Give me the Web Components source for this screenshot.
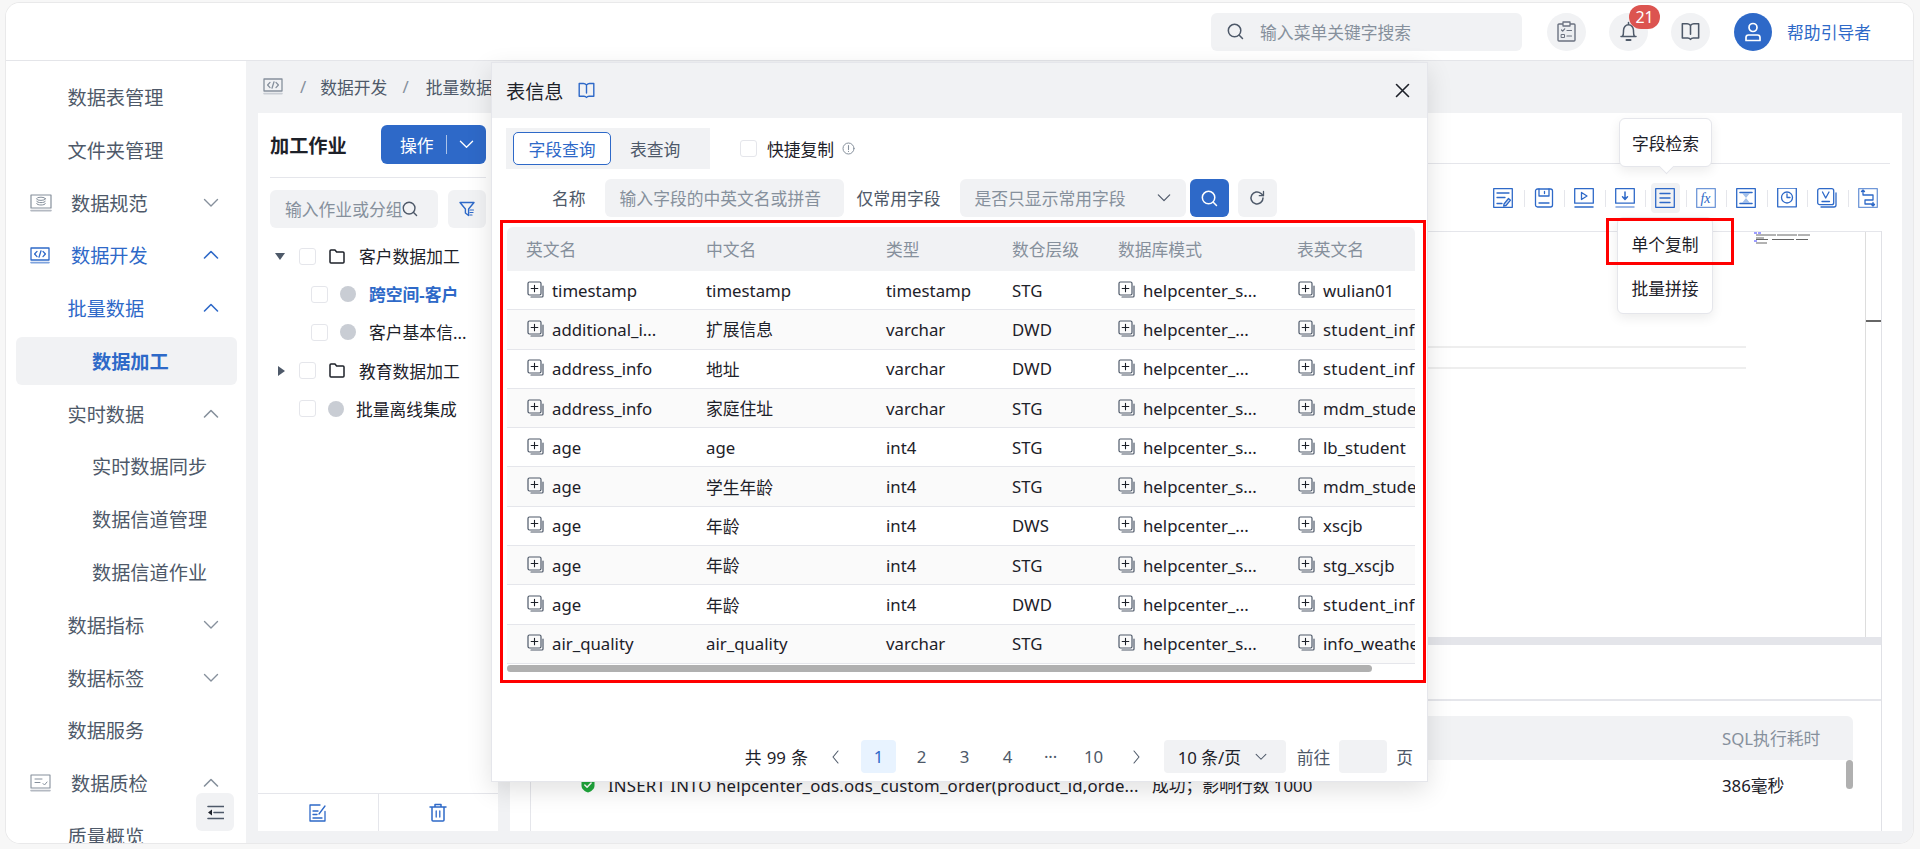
<!DOCTYPE html>
<html lang="zh">
<head>
<meta charset="utf-8">
<title>表信息</title>
<style>
html,body{margin:0;padding:0;height:849px;overflow:hidden;background:#f7f7f7;}
body{font-family:"Noto Sans","Noto Sans CJK SC",sans-serif;font-size:16.8px;color:#1d2129;}
</style>
</head>
<body>
<app-root></app-root>
<script>
const BLUE='#2e69c8';
const svg=(w,h,vb,body,extra='')=>`<svg width="${w}" height="${h}" viewBox="${vb}" fill="none" stroke-linecap="round" stroke-linejoin="round" style="display:block;flex:none;${extra}">${body}</svg>`;
const ICON={
 chevD:(c='#86909c',s=16)=>svg(s,s,'0 0 16 16',`<path d="M1.5 4.5 8 11l6.5-6.5" stroke="${c}" stroke-width="1.4"/>`),
 chevU:(c='#86909c',s=16)=>svg(s,s,'0 0 16 16',`<path d="M1.5 11 8 4.5l6.5 6.5" stroke="${c}" stroke-width="1.6"/>`),
 search:(c='#4e5969',s=18)=>svg(s,s,'0 0 18 18',`<circle cx="8" cy="8" r="6.6" stroke="${c}" stroke-width="1.6"/><path d="m13 13 3.4 3.4" stroke="${c}" stroke-width="1.6"/>`),
 dbScreen:svg(22,18,'0 0 22 18',`<rect x="1" y="1" width="20" height="13" stroke="#86909c" stroke-width="1.2"/><path d="M1 16.6h20" stroke="#b4b9c2" stroke-width="1.6"/><ellipse cx="11" cy="4.8" rx="4.4" ry="1.6" stroke="#86909c"/><path d="M6.6 7.2c0 2 8.8 2 8.8 0M6.6 9.6c0 2 8.8 2 8.8 0" stroke="#86909c"/>`),
 code:(c,c2)=>svg(20,17,'0 0 20 17',`<rect x="1" y="1" width="18" height="12" stroke="${c}" stroke-width="1.3"/><path d="M1 15.6h18" stroke="${c2}" stroke-width="1.6"/><path d="M7 4.4 4.6 7 7 9.6M13 4.4 15.4 7 13 9.6M11 3.8 9 10.2" stroke="${c}" stroke-width="1.3"/>`),
 qc:svg(21,18,'0 0 21 18',`<rect x="1" y="1" width="19" height="13" stroke="#86909c" stroke-width="1.1"/><path d="M1 16.6h19" stroke="#b4b9c2" stroke-width="1.6"/><path d="M5 5h7M5 8.5h5M13 9.5l1.5 1.5 2.5-3" stroke="#86909c"/>`),
 folder:svg(16,15,'0 0 16 15',`<path d="M1 3V2a1 1 0 0 1 1-1h4l1.6 2H14a1 1 0 0 1 1 1v9a1 1 0 0 1-1 1H2a1 1 0 0 1-1-1z" stroke="#1d2129" stroke-width="1.5"/>`),
 filter:svg(16,16,'0 0 16 16',`<path d="M1 1.5h14L9.6 8v6.5L6.4 12V8z" stroke="${BLUE}" stroke-width="1.4"/><path d="M11 9h3.5M11 11.5h3M11 14h2" stroke="${BLUE}" stroke-width="1.2"/>`),
 edit:svg(18,18,'0 0 18 18',`<path d="M16 7.5V17H1V1h10" stroke="${BLUE}" stroke-width="1.3"/><path d="M4 7h5M4 10.5h4M4 14h9M10 10l6-8" stroke="${BLUE}" stroke-width="1.3"/>`),
 trash:svg(18,19,'0 0 18 19',`<path d="M1 4h16M6 4V1.5h6V4M3 4v13a1 1 0 0 0 1 1h10a1 1 0 0 0 1-1V4" stroke="${BLUE}" stroke-width="1.5"/><path d="M7.2 8v6M10.8 8v6" stroke="${BLUE}" stroke-width="1.3"/>`),
 book:(c,w=17)=>svg(w,w,'0 0 17 17',`<path d="M8.5 3c-1-1-2-1.5-3-1.5H1.2v12.8H6c1 0 2 .4 2.5 1.2.5-.8 1.5-1.2 2.5-1.2h4.8V1.5h-4.3c-1 0-2 .5-3 1.5zM8.5 3v8" stroke="${c}" stroke-width="1.4"/>`),
 clip:svg(19,21,'0 0 19 21',`<rect x="1" y="3" width="17" height="17" rx="1" stroke="#6b7280" stroke-width="1.4" fill="#eceef1"/><rect x="6" y="1" width="7" height="4" stroke="#6b7280" stroke-width="1.3" fill="#f1f2f4"/><path d="m4.5 9 1.2 1.2 2-2.4M10 9.5h4.5M10 15h4.5" stroke="#6b7280" stroke-width="1.2"/><rect x="4.5" y="13.5" width="3" height="3" stroke="#6b7280"/>`),
 bell:svg(19,21,'0 0 19 21',`<path d="M2 15.5h15M3.5 15.5c1.2-1.5 1-4 1-6 0-3 2-5.8 5-5.8s5 2.800 5 5.800c0 2 -.2 4.500 1 6M9.500 1.500v2" stroke="#4e5969" stroke-width="1.5"/><path d="M7.500 19h4" stroke="#4e5969" stroke-width="2"/>`),
 user:svg(20,20,'0 0 20 20',`<circle cx="10" cy="5.500" r="4" stroke="#fff" stroke-width="1.7"/><path d="M3 18.500v-3a2.500 2.500 0 0 1 2.500-2.500h9a2.500 2.500 0 0 1 2.500 2.500v3z" stroke="#fff" stroke-width="1.7"/>`),
 copyPlus:svg(17,17,'0 0 17 17',`<rect x="1" y="1" width="13" height="13" rx="1.400" stroke="#4e5969" stroke-width="1.200"/><path d="M7.500 4.200v6.600M4.200 7.500h6.600" stroke="#1d2129" stroke-width="1.100"/><path d="M16 5v10a1 1 0 0 1-1 1H4" stroke="#4e5969" stroke-width="1.200"/>`),
 info:svg(13,13,'0 0 13 13',`<circle cx="6.500" cy="6.500" r="5.500" stroke="#86909c"/><path d="M6.500 3.500v4M6.500 9.300v.2" stroke="#86909c" stroke-width="1.100"/>`),
 close:svg(15,15,'0 0 15 15',`<path d="m1.500 1.500 12 12M13.500 1.500l-12 12" stroke="#1d2129" stroke-width="1.600"/>`),
 refresh:svg(16,16,'0 0 16 16',`<path d="M14 8a6 6 0 1 1-2-4.500L14.200 5.500" stroke="#4e5969" stroke-width="1.500"/><path d="M14.500 1.500v4.200h-4.200" stroke="#4e5969" stroke-width="1.300"/>`),
 check:svg(16,16,'0 0 16 16',`<path d="M8 .8 14.500 3v5.500c0 3.500-3 5.800-6.500 7-3.500-1.200-6.500-3.500-6.500-7V3z" fill="#1fa83c"/><path d="m4.800 8 2.300 2.300 4-4.300" stroke="#fff" stroke-width="1.500"/>`),
};
const T=(b)=>svg(20,20,'0 0 20 20',b);
const s=`stroke="${BLUE}" stroke-width="1.300"`;
const TOOLS=[
 T(`<rect x=".7" y=".7" width="18.600" height="18.600" ${s}/><path d="M4 5h12M4 9.500h8M4 15.500h5" ${s}/><path d="m11 16 4.500-5.500 2 1.700-4.500 5.300-2.300.5z" ${s} fill="#cfdcf3"/>`),
 T(`<rect x="1.500" y="1" width="17" height="18" rx="2" ${s}/><path d="M5 1v7h10V1M10.500 3.500v2M5 15h10" ${s}/>`),
 T(`<rect x=".7" y=".7" width="18.600" height="14.500" ${s}/><path d="m7.500 4.500 5.500 3.500-5.500 3.500z" ${s}/><path d="M1 19h18" stroke="${BLUE}" stroke-width="1.500"/>`),
 T(`<rect x=".7" y=".7" width="18.600" height="14.500" ${s}/><path d="M10 4v7M7.500 8.800 10 11.500l2.500-2.700" stroke="${BLUE}" stroke-width="1.500"/><path d="M1 19h18" stroke="#7fa3de" stroke-width="1.500"/>`),
 T(`<rect x=".7" y=".7" width="18.600" height="18.600" ${s}/><path d="M5 5.500h10M5 10h10M5 14.500h10" stroke="${BLUE}" stroke-width="1.400"/>`),
 T(`<rect x=".7" y=".7" width="18.600" height="18.600" stroke="#6f97d8" stroke-width="1.300"/><text x="9.500" y="15" text-anchor="middle" font-family="Liberation Serif" font-style="italic" font-size="14" fill="${BLUE}" stroke="none">fx</text>`),
 T(`<rect x=".7" y=".7" width="18.600" height="18.600" ${s}/><path d="M4 4.500h12M4 15.500h12" stroke="${BLUE}" stroke-width="1.600"/><path d="M6 5h8l-4 5zM6 15l4-5 4 5z" fill="#a3bfe9"/>`),
 T(`<rect x=".7" y=".2" width="18.600" height="18.600" ${s}/><circle cx="10" cy="9.500" r="5.500" ${s}/><path d="M10 6v3.500h3" ${s}/>`),
 T(`<rect x=".7" y=".7" width="16" height="16" rx="2" ${s}/><path d="M19 5v12a2 2 0 0 1-2 2H4" ${s}/><path d="m5.500 4 3.200 6L12 4M5 13.500h7.500" ${s}/>`),
 T(`<rect x=".7" y=".7" width="18.600" height="18.600" stroke="#6f97d8" stroke-width="1.300"/><path d="M5 2v5M3.500 3.500 5 2l1.500 1.500M5 7h10v5H7v4h9M15 14.500v3.500M13.500 16.500 15 18l1.500-1.500" ${s}/>`),
];
const define=(name,css,render)=>customElements.define(name,class extends HTMLElement{
  connectedCallback(){ if(this.shadowRoot) return; const r=this.attachShadow({mode:'open'}); r.innerHTML=`<style>${css}</style>${render(this)}`; }
});

define('nav-item',`
 :host{display:flex;align-items:center;flex:none;height:48px;margin:2.400px 9px 2.400px 10px;border-radius:6px;font-size:19.200px;color:#4e5969;white-space:nowrap;}
 :host([tone=blue]){color:${BLUE};}
 :host([active]){background:#f1f2f4;color:${BLUE};font-weight:700;}
 .ic{width:21px;margin-left:14px;margin-right:20px;display:flex;flex:none;}
 .lab{flex:1;}
 .ch{margin-right:18px;}
`,h=>{
 const lv=h.getAttribute('level')||'1', ic=h.getAttribute('icon'), ch=h.getAttribute('chev'), blue=h.getAttribute('tone')==='blue';
 const icon={db:ICON.dbScreen,code:ICON.code(BLUE,'#7fa3de'),qc:ICON.qc}[ic];
 const pad= icon?'':`<span style="width:${lv==='2'?76:51.500}px;flex:none"></span>`;
 const col=blue?BLUE:'#86909c';
 const chev= ch?`<span class="ch">${(ch==='up'?ICON.chevU:ICON.chevD)(col)}</span>`:'';
 return `${pad}${icon?`<span class="ic">${icon}</span>`:''}<span class="lab"><slot></slot></span>${chev}`;
});

define('side-nav',`
 :host{display:flex;flex-direction:column;width:240px;flex:none;background:#fff;padding-top:9.600px;box-sizing:border-box;overflow:hidden;position:relative;}
 .collapse{position:absolute;left:190px;top:732px;width:38px;height:38px;border-radius:6px;background:#f1f2f4;display:flex;align-items:center;justify-content:center;}
`,()=>`<slot></slot><div class="collapse">${svg(17,15,'0 0 17 15',`<path d="M1 1.500h16M7 7.500h10M1 13.500h16" stroke="#4e5969" stroke-width="1.600"/><path d="M5 4.500v6L1 7.500z" fill="#1d2129"/>`)}</div>`);

define('app-header',`
 :host{display:flex;align-items:center;justify-content:flex-end;height:58px;flex:none;box-sizing:border-box;border-bottom:1px solid #e4e5e9;background:#fff;padding-right:42px;}
 .search{width:311px;height:38px;background:#f1f2f4;border-radius:6px;display:flex;align-items:center;padding-left:16px;box-sizing:border-box;color:#86909c;gap:16px;margin-right:25px;}
 .round{width:39px;height:38px;border-radius:50%;background:#f1f2f4;display:flex;align-items:center;justify-content:center;position:relative;margin-right:23px;}
 .badge{position:absolute;left:20px;top:-8px;width:31px;height:24px;border-radius:12px;background:#dc5450;color:#fff;font-size:16px;line-height:24px;text-align:center;}
 .avatar{width:38px;height:38px;border-radius:50%;background:${BLUE};display:flex;align-items:center;justify-content:center;margin:0 15px 0 1px;}
 .name{color:${BLUE};white-space:nowrap;}
`,()=>`<div class="search">${ICON.search('#4e5969',17)}<span>输入菜单关键字搜索</span></div>
 <div class="round">${ICON.clip}</div>
 <div class="round">${ICON.bell}<span class="badge">21</span></div>
 <div class="round">${ICON.book('#4e5969',19)}</div>
 <div class="avatar">${ICON.user}</div><span class="name">帮助引导者</span>`);

define('bread-crumb',`
 :host{display:flex;align-items:center;height:52px;flex:none;padding:0 0 1px 17px;box-sizing:border-box;color:#4e5969;white-space:nowrap;}
 .sep{color:#86909c;margin:0 14px 0 17px;}
 .sep.b{margin:0 17px 0 15px;}
`,()=>`${ICON.code('#86909c','#c9cdd4')}<span class="sep">/</span><span>数据开发</span><span class="sep b">/</span><span>批量数据</span>`);

define('tree-row',`
 :host{display:flex;align-items:center;height:38.200px;white-space:nowrap;color:#1d2129;}
 :host([state=active]){color:${BLUE};font-weight:700;}
 .box{width:17px;height:17px;box-sizing:border-box;border:1.500px solid #e5e6eb;border-radius:3px;background:#fff;flex:none;}
 .dot{width:16px;height:16px;border-radius:50%;background:#c9cdd4;flex:none;margin:0 13px 0 12px;}
 .dot.l{margin-right:12px;}
 .arrow{width:29px;flex:none;display:flex;padding-left:5px;box-sizing:border-box;}
 .folder{margin:0 14px 0 13px;flex:none;display:flex;}
`,h=>{
 const t=h.getAttribute('type');
 if(t==='open'||t==='closed'){
   const a=t==='open'?`<path d="M0 2h10L5 9z" fill="#4e5969"/>`:`<path d="M3 0v10l7-5z" fill="#4e5969"/>`;
   return `<span class="arrow">${svg(10,10,'0 0 10 10',a)}</span><span class="box"></span><span class="folder">${ICON.folder}</span><slot></slot>`;
 }
 return `<span style="width:${t==='child'?41:29}px;flex:none"></span><span class="box"></span><span class="dot${t==='leaf'?' l':''}"></span><slot></slot>`;
});

define('job-panel',`
 :host{display:flex;flex-direction:column;width:240px;flex:none;background:#fff;}
 .head{height:63px;margin:0 12px;border-bottom:1px solid #e5e6eb;display:flex;align-items:center;justify-content:space-between;flex:none;padding-bottom:1px;box-sizing:content-box;}
 .title{font-size:19.200px;font-weight:700;white-space:nowrap;}
 .btn{width:105px;height:39px;background:${BLUE};border-radius:6px;color:#fff;display:flex;align-items:center;box-sizing:border-box;}
 .btn b{font-weight:400;width:65px;padding-left:19px;box-sizing:border-box;white-space:nowrap;}
 .btn i{width:1px;height:19px;background:rgba(255,255,255,.6);margin-right:12px;}
 .tools{display:flex;justify-content:space-between;margin:12px 12px 9px;flex:none;}
 .input{width:168px;height:38px;background:#f1f2f4;border-radius:6px;display:flex;align-items:center;padding-left:15px;box-sizing:border-box;color:#86909c;white-space:nowrap;overflow:hidden;}
 .fbtn{width:38px;height:38px;background:#f1f2f4;border-radius:6px;display:flex;align-items:center;justify-content:center;}
 .tree{flex:1;padding-left:12px;}
 .foot{height:37px;border-top:1px solid #e5e6eb;display:flex;flex:none;}
 .foot span{flex:1;display:flex;align-items:center;justify-content:center;}
 .foot span+span{border-left:1px solid #e5e6eb;}
`,()=>`<div class="head"><span class="title">加工作业</span><div class="btn"><b>操作</b><i></i>${ICON.chevD('#fff',15)}</div></div>
 <div class="tools"><div class="input"><span>输入作业或分组</span>${ICON.search('#4e5969',16)}</div><div class="fbtn">${ICON.filter}</div></div>
 <div class="tree"><slot></slot></div>
 <div class="foot"><span>${ICON.edit}</span><span>${ICON.trash}</span></div>`);

define('work-panel',`
 :host{display:flex;flex-direction:column;flex:1;background:#fff;min-width:0;}
 .tabs{height:50px;flex:none;margin-right:12px;border-bottom:1px solid #e5e6eb;box-sizing:content-box;}
 .toolbar{height:67px;flex:none;display:flex;justify-content:flex-end;align-items:center;padding-right:14px;border-bottom:0;}
 .tool{width:40.500px;height:20px;display:flex;justify-content:center;position:relative;}
 .tool+.tool::before{content:"";position:absolute;left:0;top:2px;height:17px;width:1px;background:#e5e6eb;}
 .tool.on::after{content:"";position:absolute;left:6px;right:5.500px;top:-5px;bottom:-5px;background:#f1f2f4;border-radius:4px;z-index:0;}
 .tool svg{position:relative;z-index:1;}
 .inner{flex:1;display:flex;flex-direction:column;margin:0 20px;border-right:1px solid #e0e1e6;border-left:1px solid #e5e6eb;min-height:0;}
 .editor{height:406px;flex:none;border-top:1.500px solid #e5e6eb;box-sizing:border-box;position:relative;}
 .mini{position:absolute;right:0;top:0;bottom:0;width:15px;border-left:1.500px solid #ddd;background:#fff;}
 .mini::after{content:"";position:absolute;left:0;right:0;top:88px;height:2px;background:#666;}
 .map{position:absolute;left:1223px;top:0;}
 .rule{position:absolute;left:0;width:1215px;height:2px;background:#eee;}
 .bar{height:8px;background:#e4e5ea;flex:none;}
 .sub{height:56px;flex:none;border-bottom:2px solid #e5e6eb;box-sizing:border-box;}
 .res{padding:15px 28px 0 15px;}
 .rh{height:44px;background:#f1f2f4;border-radius:6px 6px 0 0;display:flex;align-items:center;color:#86909c;white-space:nowrap;}
 .rr{height:50px;display:flex;align-items:center;white-space:nowrap;position:relative;margin-top:0;}
 .c1{display:flex;gap:12px;align-items:center;box-sizing:border-box;flex:none;}
 .rh span:first-child{margin-left:1176px;}
 .thumb{position:absolute;right:0;top:0;width:7px;height:29px;border-radius:4px;background:#b0b0b0;}
`,()=>`<div class="tabs"></div>
 <div class="toolbar">${TOOLS.map((t,i)=>`<span class="tool${i===4?' on':''}">${t}</span>`).join('')}</div>
 <div class="inner">
  <div class="editor">
   <div class="rule" style="top:114px"></div><div class="rule" style="top:135px"></div>
   <svg class="map" width="56" height="12" viewBox="0 0 56 12"><path d="M0 1h3M4 1h3" stroke="#3c3cff"/><path d="M2 3h20M23 3h20M44 3h12" stroke="#666" stroke-width="1"/><path d="M2 6h8" stroke="#666" stroke-width="1"/><path d="M2 7.500h12M18 7.500h22M42 7.500h12" stroke="#666" stroke-width="1"/><path d="M0 9h3" stroke="#3c3cff"/><path d="M2 11h11" stroke="#666" stroke-width="1"/></svg>
   <div class="mini"></div>
  </div>
  <div class="bar"></div>
  <div class="sub"></div>
  <div class="res">
   <div class="rh"><span>SQL执行耗时</span></div>
   <div class="rr">
    <span class="c1" style="width:1176px;padding-left:34px">${ICON.check}<span style="width:532px;overflow:hidden;flex:none;letter-spacing:.17px">INSERT INTO helpcenter_ods.ods_custom_order(product_id,orde...</span><span>成功；影响行数 1000</span></span>
    <span>386毫秒</span>
    <span class="thumb"></span>
   </div>
  </div>
 </div>`);

define('field-table',`
 :host{display:block;width:908px;margin:10px 0 0 15px;flex:none;overflow:hidden;position:relative;height:445px;}
 .g{display:grid;grid-template-columns:180px 180px 125px 106px 180px 137px;grid-template-rows:44px repeat(10,39.300px);}
 .h{background:#f1f2f4;color:#86909c;display:flex;align-items:center;padding-left:20px;white-space:nowrap;}
 .h.f{border-top-left-radius:6px}.h.l{border-top-right-radius:6px}
 .h.n,.c.n{padding-left:19px}
 .c{display:flex;align-items:center;padding-left:20px;gap:8px;white-space:nowrap;overflow:hidden;border-bottom:1px solid #e5e6eb;box-sizing:border-box;}
 .c.e{background:#fafafa;}
 .c svg{margin-top:-2px}
 .c.w span{letter-spacing:.3px}
 .sb{position:absolute;left:0;top:438px;width:865px;height:7px;border-radius:4px;background:#b0b0b0;}
`,()=>{
 const heads=['英文名','中文名','类型','数仓层级','数据库模式','表英文名'];
 const rows=[
 ['timestamp','timestamp','timestamp','STG','helpcenter_s...','wulian01'],
 ['additional_i...','扩展信息','varchar','DWD','helpcenter_...','student_inf'],
 ['address_info','地址','varchar','DWD','helpcenter_...','student_inf'],
 ['address_info','家庭住址','varchar','STG','helpcenter_s...','mdm_stude'],
 ['age','age','int4','STG','helpcenter_s...','lb_student'],
 ['age','学生年龄','int4','STG','helpcenter_s...','mdm_stude'],
 ['age','年龄','int4','DWS','helpcenter_...','xscjb'],
 ['age','年龄','int4','STG','helpcenter_s...','stg_xscjb'],
 ['age','年龄','int4','DWD','helpcenter_...','student_inf'],
 ['air_quality','air_quality','varchar','STG','helpcenter_s...','info_weathe']];
 const h=heads.map((t,i)=>`<div class="h${i===0?' f n':i===5?' l n':[1,2].includes(i)?' n':''}">${t}</div>`).join('');
 const b=rows.map((r,ri)=>r.map((t,i)=>`<div class="c${ri%2?' e':''}${[1,2].includes(i)?' n':''}${t==='student_inf'?' w':''}">${[0,4,5].includes(i)?ICON.copyPlus:''}<span>${t}</span></div>`).join('')).join('');
 return `<div class="g">${h}${b}</div><div class="sb"></div>`;
});

define('page-bar',`
 :host{display:flex;align-items:center;height:33px;margin-top:68px;padding-right:14px;justify-content:flex-end;flex:none;color:#4e5969;white-space:nowrap;}
 .t{color:#1d2129;width:65px;margin-right:8.500px;word-spacing:1px;}
 .p{width:35px;height:33px;margin-right:8px;display:flex;align-items:center;justify-content:center;border-radius:4px;}
 .p.on{background:#e8f3ff;color:${BLUE};}
 .sel{width:122px;height:33px;background:#f1f2f4;border-radius:4px;margin:0 11px 0 1.500px;display:flex;align-items:center;padding-left:14px;box-sizing:border-box;gap:14px;color:#1d2129;}
 .inp{width:48px;height:33px;background:#f1f2f4;border-radius:4px;margin:0 9px;}
`,()=>`<span class="t">共 99 条</span>
 <span class="p">${svg(9,14,'0 0 9 14','<path d="M7 1 2 7l5 6" stroke="#4e5969" stroke-width="1.100"/>')}</span>
 <span class="p on">1</span><span class="p">2</span><span class="p">3</span><span class="p">4</span><span class="p">···</span><span class="p">10</span>
 <span class="p">${svg(9,14,'0 0 9 14','<path d="m2 1 5 6-5 6" stroke="#4e5969" stroke-width="1.100"/>')}</span>
 <span class="sel">10 条/页${ICON.chevD('#4e5969',12)}</span><span>前往</span><span class="inp"></span><span>页</span>`);

define('info-modal',`
 :host{position:absolute;left:491px;top:62px;width:937px;height:720px;background:#fff;border:1px solid #e5e6eb;box-sizing:border-box;box-shadow:0 8px 24px rgba(0,0,0,.12);display:flex;flex-direction:column;z-index:5;}
 .head{height:55px;background:#f1f2f4;display:flex;align-items:center;padding:0 17px 0 14px;flex:none;font-size:19.200px;}
 .head .bk{margin-left:14px;flex:1;}
 .row{display:flex;align-items:center;flex:none;}
 .seg{margin:10px 0 0 14px;width:204px;height:41px;background:#f1f2f4;display:flex;align-items:center;padding-left:7px;box-sizing:border-box;color:#4e5969;}
 .seg b{font-weight:400;width:98px;height:33px;box-sizing:border-box;border:1px solid ${BLUE};border-radius:5px;background:#fff;color:${BLUE};display:flex;align-items:center;justify-content:center;}
 .seg span{margin-left:19px;}
 .box{width:17px;height:17px;box-sizing:border-box;border:1.500px solid #e5e6eb;border-radius:3px;margin:0 10px 0 30px;}
 .qc{margin-top:10px;color:#1d2129;}
 .qc svg{margin-left:8px}
 .form{margin-top:10px;height:38px;white-space:nowrap;color:#4e5969;}
 .in{height:38px;background:#f1f2f4;border-radius:6px;display:flex;align-items:center;padding-left:15px;box-sizing:border-box;color:#86909c;flex:none;}
 .sq{width:39px;height:38px;border-radius:6px;display:flex;align-items:center;justify-content:center;flex:none;}
`,()=>`<div class="head"><span>表信息</span><span class="bk">${ICON.book(BLUE)}</span>${ICON.close}</div>
 <div class="row"><div class="seg"><b>字段查询</b><span>表查询</span></div>
  <div class="row qc"><span class="box"></span><span>快捷复制</span>${ICON.info}</div></div>
 <div class="row form">
  <span style="margin-left:60px">名称</span>
  <div class="in" style="width:239px;margin-left:19px">输入字段的中英文名或拼音</div>
  <span style="margin-left:13px">仅常用字段</span>
  <div class="in" style="width:226px;margin-left:19px;justify-content:space-between;padding-right:15px">是否只显示常用字段${ICON.chevD('#4e5969',14)}</div>
  <div class="sq" style="background:${BLUE};margin-left:4px">${ICON.search('#fff',17)}</div>
  <div class="sq" style="background:#f1f2f4;margin-left:9px">${ICON.refresh}</div>
 </div>
 <field-table></field-table>
 <page-bar></page-bar>`);

define('pop-box',`
 :host{position:absolute;background:#fff;border:1px solid #e5e6eb;border-radius:6px;box-sizing:border-box;box-shadow:0 4px 12px rgba(0,0,0,.08);z-index:6;color:#1d2129;display:flex;flex-direction:column;align-items:center;justify-content:center;white-space:nowrap;}
 :host([arrow])::after{content:"";position:absolute;left:50%;bottom:-6px;width:10px;height:10px;margin-left:-5px;background:#fff;border-right:1px solid #e5e6eb;border-bottom:1px solid #e5e6eb;transform:rotate(45deg);}
`,()=>`<slot></slot>`);

define('red-mark',`:host{position:absolute;box-sizing:border-box;border:3px solid #f00;z-index:7;pointer-events:none;}`,()=>``);

define('app-root',`
 :host{display:block;position:relative;width:1920px;height:849px;overflow:hidden;}
 .shell{margin:3px 0 0 6px;width:1907px;height:840px;background:#fff;border-radius:14px;overflow:hidden;display:flex;flex-direction:column;box-shadow:0 0 0 1px #e9e9ea;}
 .body{display:flex;flex:1;min-height:0;}
 .main{flex:1;background:#f1f2f4;display:flex;flex-direction:column;min-width:0;}
 .work{display:flex;gap:12px;flex:1;padding:0 11px 12px 12px;min-height:0;}
 .it{height:44px;display:flex;align-items:center;}
`,()=>`<div class="shell">
 <app-header></app-header>
 <div class="body">
  <side-nav>
   <nav-item>数据表管理</nav-item>
   <nav-item>文件夹管理</nav-item>
   <nav-item icon="db" chev="down">数据规范</nav-item>
   <nav-item icon="code" chev="up" tone="blue">数据开发</nav-item>
   <nav-item chev="up" tone="blue">批量数据</nav-item>
   <nav-item level="2" active>数据加工</nav-item>
   <nav-item chev="up">实时数据</nav-item>
   <nav-item level="2">实时数据同步</nav-item>
   <nav-item level="2">数据信道管理</nav-item>
   <nav-item level="2">数据信道作业</nav-item>
   <nav-item chev="down">数据指标</nav-item>
   <nav-item chev="down">数据标签</nav-item>
   <nav-item>数据服务</nav-item>
   <nav-item icon="qc" chev="up">数据质检</nav-item>
   <nav-item>质量概览</nav-item>
  </side-nav>
  <div class="main">
   <bread-crumb></bread-crumb>
   <div class="work">
    <job-panel>
     <tree-row type="open">客户数据加工</tree-row>
     <tree-row type="child" state="active">跨空间-客户</tree-row>
     <tree-row type="child">客户基本信...</tree-row>
     <tree-row type="closed">教育数据加工</tree-row>
     <tree-row type="leaf">批量离线集成</tree-row>
    </job-panel>
    <work-panel></work-panel>
   </div>
  </div>
 </div>
</div>
<info-modal></info-modal>
<pop-box arrow style="left:1619px;top:118px;width:93px;height:49px">字段检索</pop-box>
<pop-box style="left:1617px;top:217px;width:96px;height:97px"><span class="it">单个复制</span><span class="it">批量拼接</span></pop-box>
<red-mark style="left:500px;top:220px;width:926px;height:463px"></red-mark>
<red-mark style="left:1606px;top:218px;width:128px;height:47px"></red-mark>`);
</script>
</body>
</html>
